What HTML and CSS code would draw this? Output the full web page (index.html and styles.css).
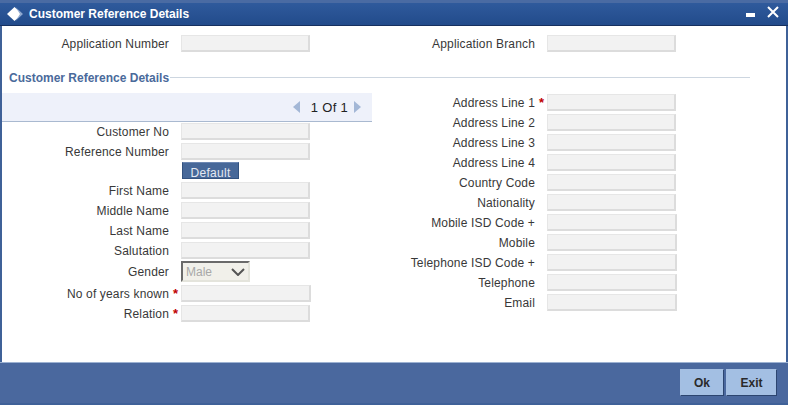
FILE: index.html
```html
<!DOCTYPE html>
<html lang="en">
<head>
    <meta charset="UTF-8">
    <title>Customer Reference Details</title>
    <link rel="stylesheet" href="styles.css">
</head>
<body>
    <div class="window">
        <div class="title-bar">
            <svg class="title-icon" width="18" height="16" viewBox="0 0 18 16">
                <path d="M8.5 1 L16 8 L8.5 15 L1 8 Z" fill="#fff"/>
                <path d="M9.5 1 L17 8 L9.5 15 L14 8 Z" fill="#8fa8cf"/>
            </svg>
            <span class="title-text">Customer Reference Details</span>
            <div class="win-controls">
                <svg width="10" height="5" viewBox="0 0 10 5"><rect width="9" height="4" fill="#fff"/></svg>
                <svg width="12" height="12" viewBox="0 0 12 12"><path d="M1 1 L11 11 M11 1 L1 11" stroke="#fff" stroke-width="2"/></svg>
            </div>
        </div>

        <div class="content">
            <div class="top-row">
                <div class="field wide-left">
                    <label>Application Number</label>
                    <input type="text">
                </div>
                <div class="field wide-right">
                    <label>Application Branch</label>
                    <input type="text">
                </div>
            </div>

            <div class="section-head">
                <span>Customer Reference Details</span>
            </div>

            <div class="columns">
                <div class="left-col">
                    <div class="pager">
                        <span class="arrow arrow-left"></span>
                        <span class="pager-text">1 Of 1</span>
                        <span class="arrow arrow-right"></span>
                    </div>
                    <div class="left-fields">
                        <div class="field"><label>Customer No</label><input type="text"></div>
                        <div class="field"><label>Reference Number</label><input type="text"></div>
                        <div class="button-row"><button class="btn-default">Default</button></div>
                        <div class="field"><label>First Name</label><input type="text"></div>
                        <div class="field"><label>Middle Name</label><input type="text"></div>
                        <div class="field"><label>Last Name</label><input type="text"></div>
                        <div class="field"><label>Salutation</label><input type="text"></div>
                        <div class="field gender-row">
                            <label>Gender</label>
                            <div class="fake-select">
                                <span>Male</span>
                                <svg width="14" height="8" viewBox="0 0 14 8"><path d="M1 1 L7 7 L13 1" fill="none" stroke="#555" stroke-width="2"/></svg>
                            </div>
                        </div>
                        <div class="field"><label>No of years known</label><b class="req">*</b><input class="input-130" type="text"></div>
                        <div class="field"><label>Relation</label><b class="req">*</b><input type="text"></div>
                    </div>
                </div>

                <div class="right-col">
                    <div class="field"><label>Address Line 1</label><b class="req">*</b><input type="text"></div>
                    <div class="field"><label>Address Line 2</label><input type="text"></div>
                    <div class="field"><label>Address Line 3</label><input type="text"></div>
                    <div class="field"><label>Address Line 4</label><input type="text"></div>
                    <div class="field"><label>Country Code</label><input type="text"></div>
                    <div class="field"><label>Nationality</label><input type="text"></div>
                    <div class="field"><label>Mobile ISD Code +</label><input class="input-130" type="text"></div>
                    <div class="field"><label>Mobile</label><input class="input-130" type="text"></div>
                    <div class="field"><label>Telephone ISD Code +</label><input class="input-130" type="text"></div>
                    <div class="field"><label>Telephone</label><input class="input-130" type="text"></div>
                    <div class="field"><label>Email</label><input class="input-130" type="text"></div>
                </div>
            </div>
        </div>

        <div class="footer">
            <button class="btn-foot">Ok</button>
            <button class="btn-foot">Exit</button>
        </div>
    </div>
</body>
</html>
```

FILE: styles.css
```css
html, body {
    margin: 0;
    padding: 0;
    height: 100%;
    overflow: hidden;
}

body {
    font-family: "Liberation Sans", Arial, sans-serif;
    font-size: 12px;
    color: #383838;
    background-color: #fff;
}

.window {
    display: flex;
    flex-direction: column;
    height: 405px;
    box-sizing: border-box;
    border-left: 2px solid #3f6198;
    border-right: 2px solid #3f6198;
}

.title-bar {
    display: flex;
    align-items: center;
    flex: none;
    height: 26px;
    box-sizing: border-box;
    margin: 0 -2px;
    padding: 0 0 0 6px;
    border-top: 3px solid #4a6ba3;
    border-bottom: 1px solid #16305f;
    background: linear-gradient(#2f5a9c, #224b8b);
}

.title-icon {
    flex: none;
}

.title-text {
    margin-left: 5px;
    color: #fff;
    font-weight: bold;
    font-size: 12px;
}

.win-controls {
    display: flex;
    align-items: flex-start;
    gap: 11px;
    margin-left: auto;
    margin-right: 9px;
    margin-top: -5px;
}

.win-controls svg {
    display: block;
}

.win-controls svg:first-child {
    margin-top: 7px;
}

.content {
    flex: 1;
    min-height: 0;
}

.field {
    display: flex;
    align-items: center;
    height: 20px;
}

.field label {
    width: 167px;
    padding-top: 2px;
    text-align: right;
    flex: none;
    letter-spacing: 0.16px;
}

.field input {
    width: 129px;
    height: 17px;
    margin: 0 0 0 12px;
    padding: 0;
    box-sizing: border-box;
    border: 1px solid #e6e6e6;
    border-bottom: 2px solid #dcdcdc;
    border-right: 2px solid #dcdcdc;
    background-color: #f2f2f2;
}

.field input.input-130 {
    width: 130px;
}

.req {
    width: 12px;
    margin-right: -12px;
    text-align: center;
    color: #c00000;
    font-size: 13px;
    flex: none;
    padding-left: 1px;
    box-sizing: border-box;
}

.top-row {
    display: flex;
    padding-top: 7px;
}

.wide-left {
    width: 370px;
}

.wide-right label {
    width: 163px;
}

.section-head {
    display: flex;
    align-items: center;
    margin-top: 15px;
    width: 748px;
    height: 20px;
    color: #4a6a9b;
    font-weight: bold;
}

.section-head span {
    padding: 0 1px 0 7px;
}

.section-head::after {
    content: "";
    flex: 1;
    height: 1px;
    margin-top: -1px;
    background-color: #cdd6e0;
}

.columns {
    display: flex;
    margin-top: 5px;
}

.left-col {
    width: 370px;
    flex: none;
}

.pager {
    display: flex;
    align-items: center;
    justify-content: flex-end;
    height: 29px;
    padding-right: 11px;
    box-sizing: border-box;
    border-bottom: 1px solid #a9b9d0;
    background-color: #eef1fa;
    color: #222;
    font-size: 13px;
}

.pager-text {
    margin: 0 6px 0 11px;
    letter-spacing: 0.3px;
}

.arrow {
    width: 0;
    height: 0;
    border-top: 6px solid transparent;
    border-bottom: 6px solid transparent;
}

.arrow-left {
    border-right: 7px solid #a3b7d6;
}

.arrow-right {
    border-left: 7px solid #a3b7d6;
}

.left-fields {
    margin-top: -1px;
}

.button-row {
    height: 18px;
    padding-left: 180px;
    padding-top: 1px;
}

.btn-default {
    display: block;
    width: 57px;
    height: 17px;
    padding: 4px 0 0;
    border: 1px solid #33527f;
    border-top-color: #6d88b3;
    background-color: #476899;
    color: #e4e9f2;
    font-family: "Liberation Sans", Arial, sans-serif;
    font-size: 12px;
    line-height: 13px;
    letter-spacing: 0.3px;
}

.gender-row {
    height: 23px;
}

.gender-row label {
    padding-top: 0;
}

.fake-select {
    display: flex;
    align-items: center;
    justify-content: space-between;
    box-sizing: border-box;
    width: 69px;
    height: 21px;
    margin-left: 12px;
    padding: 0 3px 0 3px;
    border: 2px solid #e4e4dc;
    border-top-color: #6a6a6a;
    border-left-color: #6a6a6a;
    background-color: #f1f0ea;
    color: #a8a8a8;
}

.right-col {
    margin-top: -1px;
}

.right-col .field label {
    width: 163px;
}

.footer {
    display: flex;
    justify-content: flex-end;
    align-items: flex-start;
    gap: 2px;
    flex: none;
    height: 43px;
    box-sizing: border-box;
    margin: 0 -2px;
    padding: 6px 11px 0 0;
    border-top: 1px solid #9db2d2;
    border-bottom: 2px solid #3f6198;
    background-color: #4a689e;
}

.btn-foot {
    width: 44px;
    height: 27px;
    padding: 0;
    border: 1px solid #a5bfe2;
    border-right-color: #2c4570;
    border-bottom-color: #2c4570;
    background-color: #a3bfe3;
    color: #2a2a2a;
    font-family: "Liberation Sans", Arial, sans-serif;
    font-size: 12px;
    font-weight: bold;
}

.btn-foot:last-child {
    width: 51px;
}
```
